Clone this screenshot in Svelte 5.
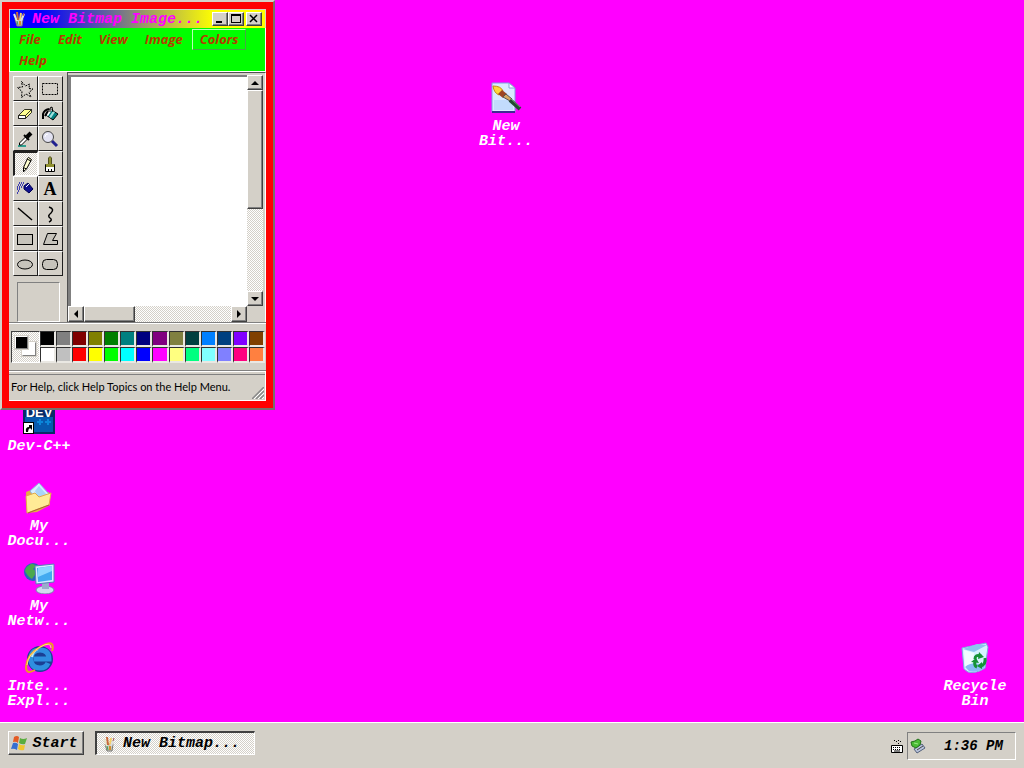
<script>
  const menus = ['File', 'Edit', 'View', 'Image', 'Colors', 'Help']
  const tools = [
    'Free-Form Select', 'Select', 'Eraser', 'Fill', 'Pick Color', 'Magnifier', 'Pencil', 'Brush',
    'Airbrush', 'Text', 'Line', 'Curve', 'Rectangle', 'Polygon', 'Ellipse', 'Rounded Rectangle'
  ]
  const colors = [
    '#000000', '#808080', '#800000', '#808000', '#008000', '#008080', '#000080', '#800080',
    '#808040', '#004040', '#0080ff', '#004080', '#8000ff', '#804000',
    '#ffffff', '#c0c0c0', '#ff0000', '#ffff00', '#00ff00', '#00ffff', '#0000ff', '#ff00ff',
    '#ffff80', '#00ff80', '#80ffff', '#8080ff', '#ff0080', '#ff8040'
  ]
  const shortcuts = [
    { id: 'bitmap', lines: ['New', 'Bit...'] },
    { id: 'dev', lines: ['Dev-C++'] },
    { id: 'documents', lines: ['My', 'Docu...'] },
    { id: 'network', lines: ['My', 'Netw...'] },
    { id: 'explorer', lines: ['Inte...', 'Expl...'] },
    { id: 'recycle', lines: ['Recycle', 'Bin'] }
  ]

  let tool = $state('Pencil')
  let foreground = $state('#000000')
  let hovered = $state('Colors')
</script>

{#snippet paintIcon()}
  <svg class="small-icon" viewBox="0 0 16 16" aria-hidden="true">
    <path d="M4 8h8l-1 7H6z" fill="#c9c9b8" stroke="#777" />
    <path d="M6 10L3 3" stroke="#e8e8d0" stroke-width="2" />
    <path d="M7 9L6 1" stroke="#c9683a" stroke-width="2" />
    <path d="M9 9l1-7" stroke="#f2cf68" stroke-width="2" />
    <path d="M10 10l3-7" stroke="#ddd" stroke-width="2" />
    <path d="M12 5l1-3" stroke="#a55" />
    <path d="M6 10l1 4" stroke="#3c9e54" />
    <path d="M9 10v4" stroke="#d58b2c" stroke-width="2" />
  </svg>
{/snippet}

{#snippet arrow(direction)}
  <svg class="arrow" viewBox="0 0 8 8" aria-hidden="true">
    {#if direction === 'up'}<path d="M0 6h8L4 2z" />
    {:else if direction === 'down'}<path d="M0 2h8L4 6z" />
    {:else if direction === 'left'}<path d="M6 0v8L2 4z" />
    {:else}<path d="M2 0v8l4-4z" />{/if}
  </svg>
{/snippet}

{#snippet toolIcon(name)}
  <svg class="tool-icon" viewBox="0 0 18 18" aria-hidden="true" fill="none" stroke="#000">
    {#if name === 'Free-Form Select'}
      <path d="M5.500 1.500l4 4.500 4-2-.5 4.500 4 .5-4 3.500 2 4.500-5-3-4.500 3.500.5-6-4.500-4 5-.5z" stroke-dasharray="2 1" />
    {:else if name === 'Select'}
      <rect x="1.5" y="3.5" width="15" height="11" stroke-dasharray="2 1" />
    {:else if name === 'Eraser'}
      <path d="M2.500 10.500l6-6h7v3l-6 6h-7z" fill="#ffff90" stroke-width=".8" />
      <path d="M2.500 10.500h7v3h-7z" fill="#fff" stroke-width=".8" />
      <path d="M9.500 10.500l6-6" stroke-width=".8" />
    {:else if name === 'Fill'}
      <path d="M9 4l8 5-5 6-7-5z" fill="#008080" />
      <path d="M9 4l2 1-4 6-2-1z" fill="#fff" stroke="none" />
      <path d="M12 6l2 1-4 6-2-1z" fill="#9fe0dc" stroke="none" />
      <path d="M2 14V9q1-4 6-5M4 11l3-5" stroke-width="2" />
      <path d="M9 7V3l2-1 1 5" />
    {:else if name === 'Pick Color'}
      <path d="M2 16h8" stroke="#30a090" stroke-width="2" />
      <path d="M3.500 15v-2l6-6 2 2-6 6z" fill="#fff" />
      <path d="M8 5l5 5" stroke-width="2" />
      <path d="M11 7l4-4" stroke-width="4" />
    {:else if name === 'Magnifier'}
      <circle cx="7" cy="7" r="5.5" fill="#e2e2f2" stroke="#444" />
      <path d="M4 7q0-3 3-3" stroke="#fff" />
      <path d="M11 11l5 5" stroke="#202090" stroke-width="3" />
    {:else if name === 'Pencil'}
      <path d="M6.500 16.500v-4l4-9 1-1 3 2-5 9.500z" fill="#ffffd0" />
      <path d="M10 4l4 2M6.500 12.500l3 1.500" />
      <path d="M6 17v-2l2 1z" fill="#000" stroke="none" />
    {:else if name === 'Brush'}
      <path d="M7.500 9V3l1.500-1.500L10.500 3v6" fill="#909030" stroke="#505020" />
      <path d="M4.500 9.500h9v7h-9z" fill="#fff" />
      <path d="M5 9h8v3H5z" fill="#909030" stroke="none" />
      <path d="M7.500 17v-3M10.500 17v-3" />
    {:else if name === 'Airbrush'}
      <path d="M8 6l4-3 5 6-4 4-5-4z" fill="#101090" stroke="#000050" />
      <path d="M10 7l3-3" stroke="#fff" />
      <path d="M8 3H2M7 5H1M6 7H1M4 9H1M3 11H1M2 13H1" stroke="#4040b0" stroke-dasharray="1 1" stroke-width="2" />
    {:else if name === 'Text'}
      <text class="glyph" x="9" y="15" text-anchor="middle">A</text>
    {:else if name === 'Line'}
      <path d="M2 3l14 12" stroke-width="1.500" />
    {:else if name === 'Curve'}
      <path d="M8 2q6 2 2 6-4 3-1 5 3 2-1 4" stroke-width="1.500" />
    {:else if name === 'Rectangle'}
      <rect x="1.5" y="4.5" width="15" height="10" fill="#c6c3bb" />
    {:else if name === 'Polygon'}
      <path d="M6.500 3.500h9l-4 7h5v4h-14z" fill="#c6c3bb" />
    {:else if name === 'Ellipse'}
      <ellipse cx="9" cy="9.500" rx="7.500" ry="4.500" fill="#c6c3bb" />
    {:else}
      <rect x="1.500" y="4.500" width="15" height="10" rx="4" fill="#c6c3bb" />
    {/if}
  </svg>
{/snippet}

{#snippet desktopIcon(id)}
  <svg class="large-icon" viewBox="0 0 32 32" aria-hidden="true">
    {#if id === 'bitmap'}
      <path d="M2 1h17l6 5v24H2z" fill="#d9eaff" stroke="#7f9fe0" />
      <path d="M2 30h23" stroke="#3e2a93" stroke-width="2" />
      <path d="M4 18h19v10H4z" fill="#c2dbfc" />
      <path d="M19 1v5h6z" fill="#fff" stroke="#86a2d5" />
      <path d="M3 4q8 0 10 5l-4 4Q4 11 3 4z" fill="#ffd83a" stroke="#c98910" />
      <path d="M8 12l4-4 5 4-4 4z" fill="#9d4622" />
      <path d="M13 15l3-3 6 5-2 2z" fill="#d8a860" stroke="#555" />
      <path d="M20 18l10 9" stroke="#254b32" stroke-width="4" />
      <path d="M21 17l9 8" stroke="#6b9c72" />
    {:else if id === 'dev'}
      <rect x="0" y="0" width="32" height="32" fill="#0a2b68" />
      <rect x="2" y="15" width="28" height="15" fill="#0759ad" />
      <text class="dev-word" x="16" y="15" text-anchor="middle">DEV</text>
      <path d="M14 20h6M17 17v6M22 20h6M25 17v6" stroke="#0b86d8" stroke-width="2" />
      <rect x=".5" y="20.500" width="10" height="11" fill="#fff" stroke="#000" />
      <path d="M3 30q-1-5 3-5v-2H4h5v5L7 26q-2 1-2 4z" />
    {:else if id === 'documents'}
      <path d="M3 10l7-3 4 3 12 0 1 13-13 7L4 31z" fill="#e4ac45" />
      <path d="M7 9l9-8 10 11-9 11z" fill="#d5edff" stroke="#8faede" />
      <path d="M12 9l4-5 8 9-7 7z" fill="#a9d4f7" />
      <path d="M3 14l9-3 4 4 12-4-2 12-22 8z" fill="#ffeb96" stroke="#e0a94c" />
      <path d="M5 31l21-8" stroke="#a9603a" />
    {:else if id === 'network'}
      <circle cx="10" cy="10" r="9" fill="#2864bd" />
      <path d="M3 6q6-7 10-2l-3 3 4 3-5 7q-5-3-7-8z" fill="#4ba94e" />
      <ellipse cx="22" cy="28" rx="9" ry="4" fill="#d2d9ee" stroke="#7884ac" />
      <path d="M19 20h7v7h-7z" fill="#9caacc" />
      <path d="M12 4l19-2v18l-18 2z" fill="#d9eaff" stroke="#5a7db9" />
      <path d="M14 6l15-2v14l-14 2z" fill="#42aaf0" />
      <path d="M15 6l14-2v5L15 15z" fill="#8bd7ff" />
    {:else if id === 'explorer'}
      <circle cx="17" cy="17" r="13" fill="#1b3f94" />
      <path d="M25 21q-2 5-8 5-9 0-9-9t9-9q9 0 9 9H11" fill="none" stroke="#2f8fe0" stroke-width="5" />
      <path d="M9 15q1-6 6-8" fill="none" stroke="#c0ebff" stroke-width="2" />
      <path d="M29 9q4-13-12-4Q4 12 3 25q0 8 9 3" fill="none" stroke="#ee9a26" stroke-width="2" />
      <path d="M28 6q0-7-11-1Q5 12 4 23" fill="none" stroke="#ffe477" />
    {:else}
      <path d="M3 6l24-5 2 4-3 21q-9 6-17 4L5 27z" fill="#d5f1ff" stroke="#78afe0" />
      <path d="M4 7l11 3 13-7-10-1z" fill="#8cc4ee" />
      <path d="M5 8l10 3-2 16-7-1z" fill="#f1fbff" />
      <path d="M6 25q8-7 20-1l-2 3q-8 4-14 2z" fill="#89baf5" />
      <g fill="none" stroke="#159336" stroke-width="3">
        <path d="M16 17q0-5 6-3M26 16q1 6-4 8M18 25q-3-1-2-6" />
      </g>
      <path d="M20 10l5 5-6 2zM23 20v7l-5-3zM12 20l5-4 3 5z" fill="#159336" />
    {/if}
  </svg>
{/snippet}

<main class="desktop">
  <section class="workspace" aria-label="Desktop">
    {#each shortcuts as item}
      <button class="shortcut {item.id}">
        {@render desktopIcon(item.id)}
        {#each item.lines as line}<span>{line}</span>{/each}
      </button>
    {/each}

    <article class="window">
      <header class="titlebar">
        {@render paintIcon()}
        <h1>New Bitmap Image...</h1>
        <button class="caption" aria-label="Minimize">
          <svg viewBox="0 0 12 10"><path d="M2 7h6v2H2z" /></svg>
        </button>
        <button class="caption" aria-label="Maximize">
          <svg viewBox="0 0 12 10"><path fill-rule="evenodd" d="M1 0h10v9H1zM2 2v6h8V2z" /></svg>
        </button>
        <button class="caption close" aria-label="Close">
          <svg viewBox="0 0 12 10"><path class="cross" d="M2 1l7 7M9 1L2 8" /></svg>
        </button>
      </header>
      <nav class="menubar">
        {#each menus as menu}
          <button class:hovered={hovered === menu} onmouseenter={() => (hovered = menu)}>{menu}</button>
        {/each}
      </nav>

      <div class="editor">
        <aside class="toolbox">
          <div class="tools">
            {#each tools as name}
              <button class:pressed={tool === name} aria-label={name} aria-pressed={tool === name} onclick={() => (tool = name)}>
                {@render toolIcon(name)}
              </button>
            {/each}
          </div>
          <div class="options"></div>
        </aside>
        <div class="view">
          <div class="paper"></div>
          <div class="scroll vertical">
            <button aria-label="Scroll up">{@render arrow('up')}</button>
            <div class="thumb"></div>
            <div class="track"></div>
            <button aria-label="Scroll down">{@render arrow('down')}</button>
          </div>
          <div class="scroll horizontal">
            <button aria-label="Scroll left">{@render arrow('left')}</button>
            <div class="thumb"></div>
            <div class="track"></div>
            <button aria-label="Scroll right">{@render arrow('right')}</button>
          </div>
          <div class="corner"></div>
        </div>
      </div>

      <div class="palette">
        <div class="current">
          <i class="background"></i>
          <i class="foreground" style="background: {foreground}"></i>
        </div>
        <div class="swatches">
          {#each colors as color}
            <button aria-label={color} style="background: {color}" onclick={() => (foreground = color)}></button>
          {/each}
        </div>
      </div>
      <footer class="status">
        <p>For Help, click Help Topics on the Help Menu.</p>
        <svg viewBox="0 0 12 12" aria-hidden="true">
          <path d="M0 12L12 0M4 12l8-8M8 12l4-4" stroke="#888" stroke-width="1.500" />
          <path d="M2 12L12 2M6 12l6-6M10 12l2-2" stroke="#fff" />
        </svg>
      </footer>
    </article>
  </section>

  <footer class="taskbar">
    <button class="start">
      <svg class="small-icon" viewBox="0 0 16 16" aria-hidden="true">
        <path d="M3 2q3-2 5 0L7 8Q5 6 2 7z" fill="#e45b24" />
        <path d="M9 3q3 2 7 0l-2 6q-3 1-6-1z" fill="#59ad3d" />
        <path d="M2 8q3-1 5 1l-1 6q-3-2-6-1z" fill="#356fd1" />
        <path d="M8 9q3 2 6 1l-1 5q-4 1-6-1z" fill="#f0c52e" />
      </svg>
      Start
    </button>
    <button class="task">{@render paintIcon()}New Bitmap...</button>
    <svg class="keyboard" viewBox="0 0 12 14" aria-hidden="true">
      <path d="M3 1.500h1M5 2.500h1M7 1.500h1M9 2.500h1M7 4.500h1" />
      <path d="M.5 6.500h11v7H.5z" fill="#fff" />
      <path d="M2 8.500h8M2 10.500h8" stroke-dasharray="1 1" />
      <path d="M3 12h6" />
    </svg>
    <div class="tray">
      <svg class="small-icon" viewBox="0 0 16 16" aria-hidden="true">
        <path d="M4 11l8-5 3 4-8 5z" fill="#b8c3dc" stroke="#53607a" />
        <path d="M7 12l6-4" stroke="#444" />
        <path d="M1 4l4-1 3-2 3 2-1 4-4 3-4-2z" fill="#4bbc35" stroke="#24711d" />
        <path d="M4 5l4 1" stroke="#9be889" />
      </svg>
      <time>1:36 PM</time>
    </div>
  </footer>
</main>

<style>
  :global(body) {
    margin: 0;
  }

  .desktop {
    --face: #d4d0c8;
    --checker: repeating-conic-gradient(#fff 0 25%, #d4d0c8 0 50%) 0 0 / 2px 2px;
    display: flex;
    flex-direction: column;
    height: 100vh;
    overflow: hidden;
    background: #f0f;
    font: italic bold 15px/15px "Liberation Mono", monospace;
  }
  .desktop * {
    box-sizing: border-box;
  }
  button {
    margin: 0;
    padding: 0;
    border: 0;
    color: #000;
    font: inherit;
  }
  svg {
    display: block;
    flex: none;
  }
  .small-icon {
    width: 16px;
    height: 16px;
    fill: none;
  }
  .workspace {
    position: relative;
    flex: 1;
  }

  /* desktop shortcuts */
  .shortcut {
    position: absolute;
    display: flex;
    flex-direction: column;
    align-items: center;
    width: 76px;
    background: none;
    color: #fff;
  }
  .large-icon {
    width: 32px;
    height: 32px;
    margin-bottom: 5px;
  }
  .bitmap { left: 468px; top: 82px; }
  .dev { left: 1px; top: 402px; }
  .documents { left: 1px; top: 482px; }
  .network { left: 1px; top: 562px; }
  .explorer { left: 1px; top: 642px; }
  .recycle { right: 11px; bottom: 13px; }
  .dev-word {
    fill: #fff;
    font: bold 13px "Liberation Sans", sans-serif;
  }

  /* window */
  .window {
    position: absolute;
    left: 0;
    top: 0;
    width: 275px;
    padding: 7px;
    border: 2px solid;
    border-color: #d4d0c8 #77706c #77706c #d4d0c8;
    background: #f00;
  }
  .titlebar {
    display: flex;
    align-items: center;
    height: 19px;
    padding: 0 3px 0 1px;
    border: solid var(--face);
    border-width: 1px 1px 0;
    background: linear-gradient(90deg, #00f 12%, #ff0 80%);
  }
  h1 {
    flex: 1;
    margin: 0 0 0 5px;
    color: #f0f;
    font: inherit;
    white-space: nowrap;
  }
  .caption,
  .scroll button,
  .thumb,
  .start {
    display: flex;
    align-items: center;
    justify-content: center;
    border: 1px solid;
    border-color: #fff #404040 #404040 #fff;
    background: var(--face);
    box-shadow: inset -1px -1px #808080;
  }
  .caption {
    flex: none;
    width: 16px;
    height: 14px;
  }
  .caption svg {
    width: 12px;
    height: 10px;
  }
  .caption .cross {
    stroke: #000;
    stroke-width: 1.5;
  }
  .close {
    margin-left: 2px;
  }
  .menubar {
    display: flex;
    flex-wrap: wrap;
    column-gap: 1px;
    padding: 1px 1px 0;
    border: solid #fff;
    border-width: 0 1px 1px;
    background: #0f0;
  }
  .menubar button {
    height: 21px;
    padding: 0 7px;
    border: 1px solid transparent;
    background: none;
    color: #b43c00;
    font: italic bold 13px/19px "Open Sans", sans-serif;
  }
  .menubar .hovered {
    border-color: #b8ffb8 #46a646 #46a646 #b8ffb8;
  }

  /* tools and canvas */
  .editor {
    display: flex;
    height: 251px;
    border-bottom: 1px solid #808080;
    background: var(--face);
  }
  .toolbox {
    display: flex;
    flex-direction: column;
    width: 58px;
    padding: 4px 4px 0;
  }
  .tools {
    display: grid;
    grid-template-columns: 25px 25px;
    grid-auto-rows: 25px;
  }
  .tools button {
    display: flex;
    align-items: center;
    justify-content: center;
    padding-right: 1px;
    border: 1px solid;
    border-color: #fff #202020 #202020 #fff;
    background: var(--face);
  }
  .tools .pressed {
    border-width: 2px 1px 1px 2px;
    border-color: #202020 #fff #fff #202020;
    background: var(--checker);
  }
  .tool-icon {
    width: 18px;
    height: 18px;
  }
  .glyph {
    fill: #000;
    stroke: none;
    font: bold 18px "Liberation Serif", serif;
  }
  .options {
    flex: 1;
    width: 43px;
    margin: 6px 0 0 4px;
    border: 1px solid;
    border-color: #808080 #fff #fff #808080;
  }
  .view {
    display: grid;
    flex: 1;
    grid-template: 1fr 16px / 1fr 16px;
    padding: 2px 2px 0 0;
    border: solid #505050;
    border-width: 1px 0 0 1px;
    border-right: 1px solid #fff;
    background: var(--face);
  }
  .paper {
    border: solid #808080;
    border-width: 2px 0 0 3px;
    background: #fff;
  }
  .scroll {
    display: flex;
    background: var(--checker);
  }
  .vertical {
    flex-direction: column;
  }
  .scroll button {
    flex: none;
    width: 16px;
    height: 16px;
  }
  .vertical button {
    height: 15px;
  }
  .arrow {
    width: 8px;
    height: 8px;
  }
  .track {
    flex: 1;
  }
  .vertical .thumb {
    height: 119px;
  }
  .horizontal .thumb {
    width: 51px;
  }

  /* color box */
  .palette {
    display: flex;
    height: 48px;
    padding: 7px 1px 0 2px;
    border-top: 1px solid #fff;
    border-bottom: 1px solid #808080;
    background: var(--face);
  }
  .current {
    display: grid;
    grid-template: repeat(6, 5px) / repeat(6, 5px);
    width: 29px;
    height: 32px;
    border: 1px solid;
    border-color: #404040 #fff #fff #404040;
    background: var(--checker);
  }
  .current i {
    border: 1px solid;
    border-color: #fff #808080 #808080 #fff;
    outline: 1px solid var(--face);
  }
  .current .background {
    grid-area: 3 / 3 / 6 / 6;
    width: 14px;
    height: 14px;
    background: #fff;
  }
  .current .foreground {
    grid-area: 1 / 1 / 4 / 4;
    width: 13px;
    height: 13px;
    margin: 4px 0 0 3px;
  }
  .swatches {
    display: grid;
    flex: 1;
    grid-template-columns: repeat(14, 1fr);
    grid-auto-rows: 16px;
  }
  .swatches button {
    border: solid;
    border-width: 1px 2px 2px 1px;
    border-color: #303030 #eae8e3 #eae8e3 #303030;
  }
  .status {
    display: flex;
    align-items: flex-end;
    justify-content: space-between;
    height: 30px;
    padding: 2px 1px 1px 0;
    border: solid #fff;
    border-width: 1px 1px 1px 0;
    background: linear-gradient(#808080, #808080) 0 2px / 100% 1px no-repeat var(--face);
    color: #000;
    font: normal 11px/25px Lato, sans-serif;
  }
  .status p {
    margin: 0 0 0 2px;
    white-space: nowrap;
  }
  .status svg {
    width: 12px;
    height: 12px;
  }

  /* taskbar */
  .taskbar {
    display: flex;
    align-items: flex-start;
    height: 46px;
    padding: 8px 8px 0;
    border-top: 1px solid #fff;
    background: var(--face);
  }
  .start {
    gap: 5px;
    width: 76px;
    height: 24px;
    padding-right: 3px;
  }
  .task {
    display: flex;
    align-items: center;
    gap: 6px;
    width: 160px;
    height: 24px;
    margin-left: 11px;
    padding-left: 4px;
    border: 1px solid;
    border-width: 2px 1px 1px 2px;
    border-color: #404040 #fff #fff #404040;
    background: var(--checker);
  }
  .keyboard {
    width: 12px;
    height: 14px;
    margin: 8px 4px 0 auto;
    fill: none;
    stroke: #000;
  }
  .tray {
    display: flex;
    align-items: center;
    gap: 18px;
    width: 109px;
    height: 28px;
    margin-top: 1px;
    padding-left: 2px;
    border: 1px solid;
    border-color: #808080 #fff #fff #808080;
    font-size: 14px;
    white-space: nowrap;
  }
</style>
